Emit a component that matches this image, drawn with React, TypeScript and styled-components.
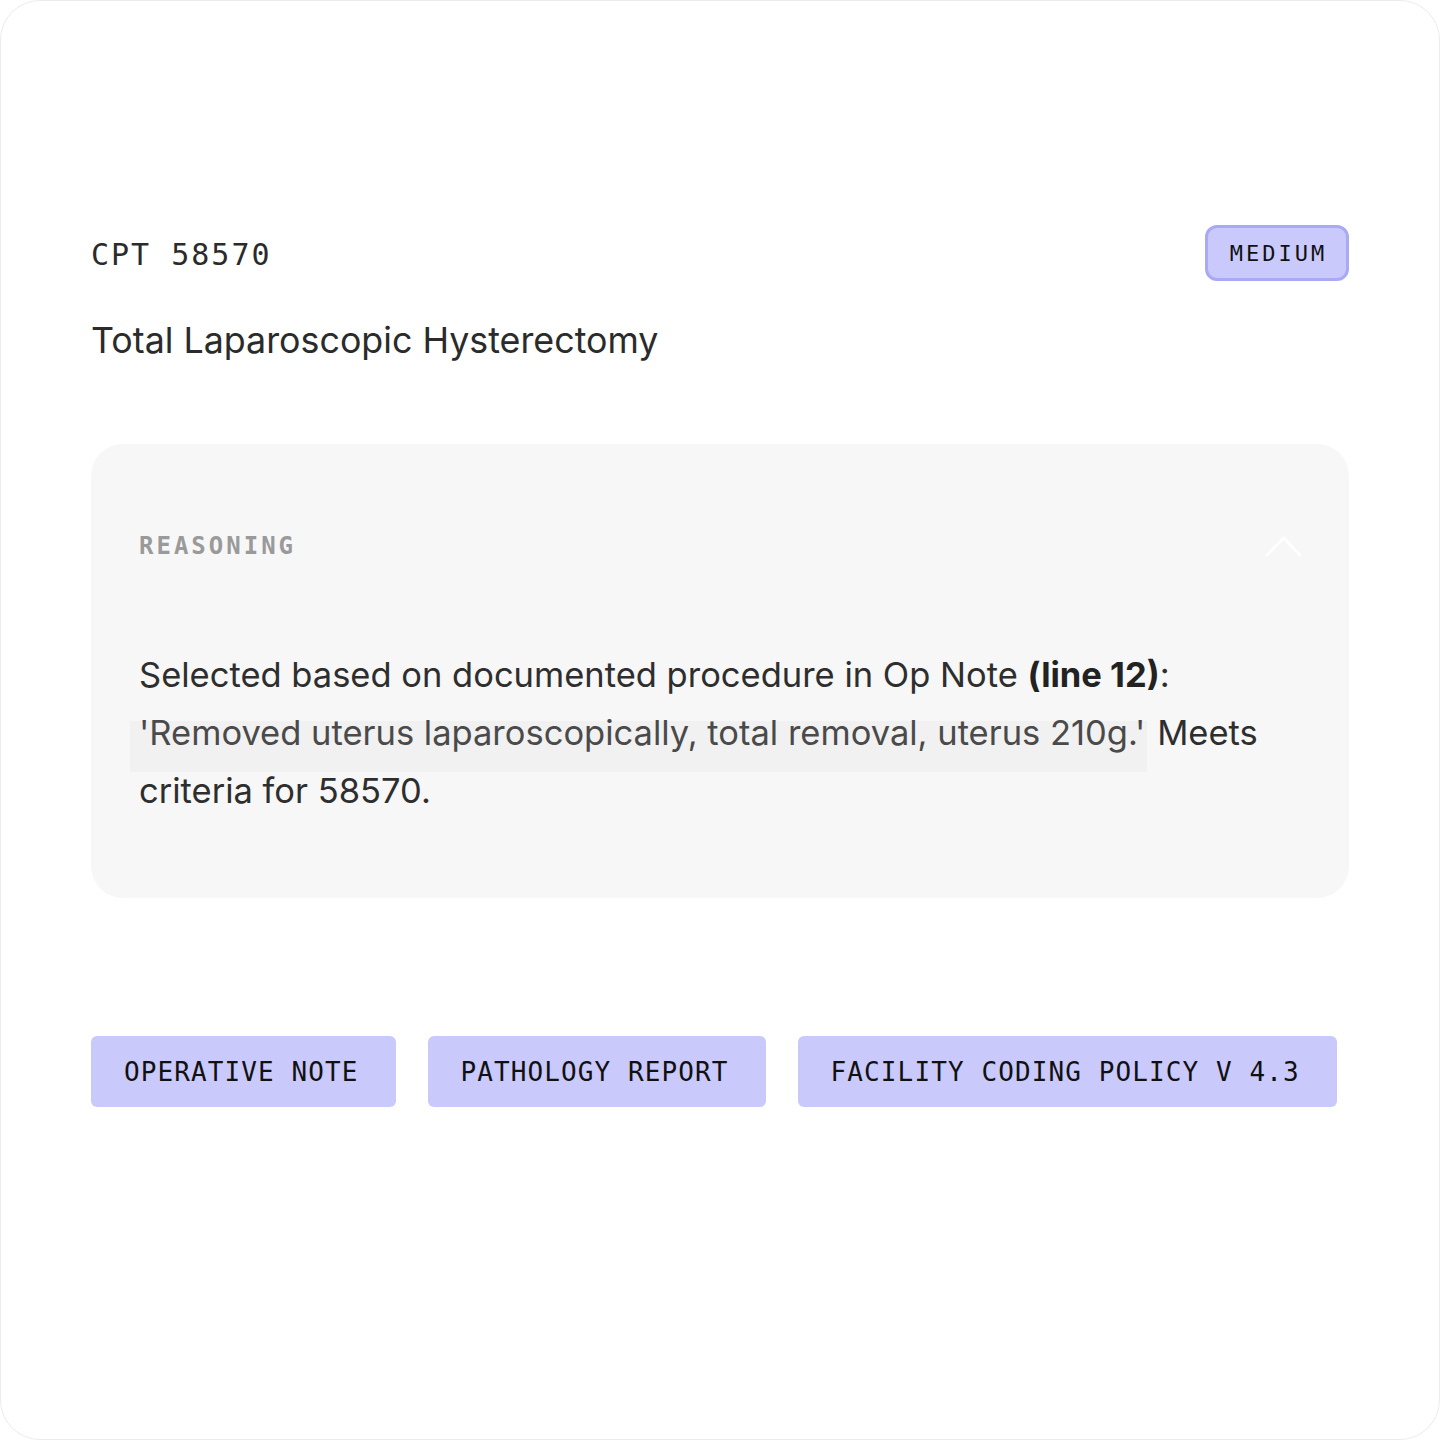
import React from 'react';
import styled, {createGlobalStyle} from "styled-components";

const GlobalStyle = createGlobalStyle`
  html, body {
    margin: 0;
    padding: 0;
    background: #ffffff;
  }
  * {
    box-sizing: border-box;
  }
`

const mono = `"DejaVu Sans Mono", "Liberation Mono", monospace`;
const sans = `Inter, "Noto Sans", "Liberation Sans", sans-serif`;

const sources = ["OPERATIVE NOTE", "PATHOLOGY REPORT", "FACILITY CODING POLICY V 4.3"];

export default function App() {
    return (
        <>
            <GlobalStyle/>
            <Frame>
                <HeaderRow>
                    <CodeLabel>CPT 58570</CodeLabel>
                    <Badge>MEDIUM</Badge>
                </HeaderRow>
                <Title>Total Laparoscopic Hysterectomy</Title>

                <ReasoningPanel>
                    <PanelHead>
                        <PanelLabel>REASONING</PanelLabel>
                        <svg width="38" height="22" viewBox="0 0 38 22" fill="none">
                            <path d="M4 20 L20.5 3 L37 20" stroke="#ffffff" strokeWidth="3" strokeLinecap="round" strokeLinejoin="round"/>
                        </svg>
                    </PanelHead>
                    <Body>
                        Selected based on documented procedure in Op Note <strong>(line 12)</strong>:{" "}
                        <Quote>'Removed uterus laparoscopically, total removal, uterus 210g.'</Quote> Meets
                        criteria for 58570.
                    </Body>
                </ReasoningPanel>

                <TagRow>
                    {sources.map((s) => (
                        <Tag key={s}>{s}</Tag>
                    ))}
                </TagRow>
            </Frame>
        </>
    )
}

const Frame = styled.div`
  width: 1440px;
  height: 1440px;
  border: 1px solid #ececec;
  border-radius: 40px;
  padding: 224px 90px 0 90px;
  background: #fff;
`

const HeaderRow = styled.div`
  display: flex;
  justify-content: space-between;
  align-items: center;
  height: 56px;
`

const CodeLabel = styled.span`
  font-family: ${mono};
  font-size: 30px;
  letter-spacing: 2px;
  color: #2b2b2b;
  margin-top: 2px;
`

const Badge = styled.span`
  display: flex;
  align-items: center;
  justify-content: center;
  width: 144px;
  height: 56px;
  border: 3px solid #a9a9f4;
  border-radius: 12px;
  background: #c9c9fc;
  font-family: ${mono};
  font-size: 22px;
  letter-spacing: 3px;
  padding-left: 3px;
  color: #111;
`

const Title = styled.h1`
  margin: 36px 0 0 0;
  font-family: ${sans};
  font-weight: 400;
  font-size: 35.8px;
  line-height: 46px;
  color: #2b2b2b;
`

const ReasoningPanel = styled.section`
  margin-top: 81px;
  background: #f7f7f7;
  border-radius: 32px;
  padding: 90px 48px 78px 48px;
`

const PanelHead = styled.div`
  display: flex;
  justify-content: space-between;
  align-items: center;
  height: 24px;
`

const PanelLabel = styled.span`
  font-family: ${mono};
  font-weight: 700;
  font-size: 24px;
  letter-spacing: 3px;
  color: #9a9a9a;
`

const Body = styled.p`
  margin: 88px 0 0 0;
  font-family: ${sans};
  font-size: 34.5px;
  line-height: 58px;
  color: #2e2e2e;

  strong {
    font-weight: 700;
    color: #222;
  }
`

const Quote = styled.span`
  background: linear-gradient(#f1f1f1, #f1f1f1) 0 100% / 100% 51px no-repeat;
  color: #4a4a4a;
  padding: 0 2px 19px 9px;
  margin-left: -9px;
`

const TagRow = styled.div`
  display: flex;
  gap: 32px;
  margin-top: 138px;
`

const Tag = styled.span`
  display: flex;
  align-items: center;
  height: 71px;
  padding: 0 37px 0 33px;
  background: #c9c9fc;
  border-radius: 6px;
  font-family: ${mono};
  font-size: 26px;
  letter-spacing: 1.1px;
  color: #111;
`
